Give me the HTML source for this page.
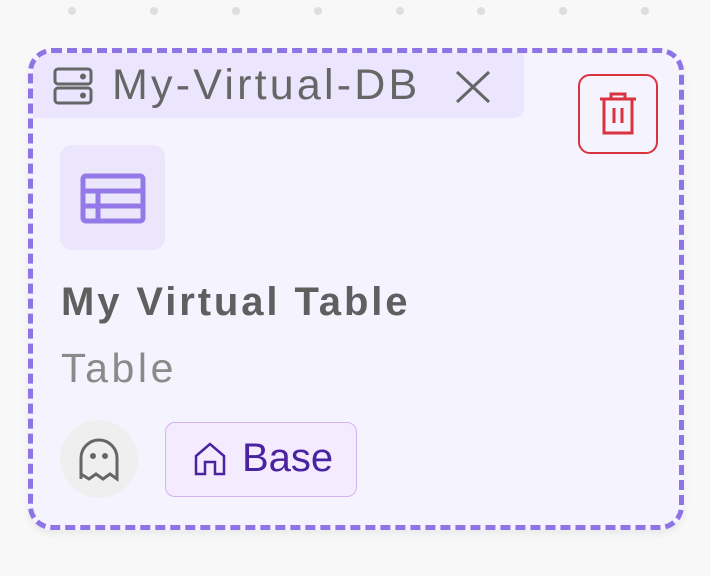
<!DOCTYPE html>
<html><head><style>
body{margin:0;width:710px;height:576px;background:#f8f8f8;position:relative;overflow:hidden;font-family:"Liberation Sans",sans-serif}
.dot{position:absolute;top:7px;width:8px;height:8px;border-radius:50%;background:#dedede}
.card{position:absolute;left:28px;top:48px;width:646px;height:472px;border:5px dashed #8f74e6;border-radius:24px;background:#f5f3fe;box-shadow:0 4px 8px rgba(0,0,0,.06)}
.tab{position:absolute;left:33px;top:53px;width:491px;height:65px;background:#ebe6fd;border-radius:20px 0 10px 0}
.t{position:absolute;white-space:nowrap}
</style></head><body>
<div class="dot" style="left:68px"></div><div class="dot" style="left:150px"></div><div class="dot" style="left:232px"></div><div class="dot" style="left:314px"></div><div class="dot" style="left:396px"></div><div class="dot" style="left:477px"></div><div class="dot" style="left:559px"></div><div class="dot" style="left:641px"></div>
<div class="card"></div>
<div class="tab"></div>
<svg style="position:absolute;left:53px;top:67px" width="40" height="38" viewBox="0 0 40 38" fill="none" stroke="#666" stroke-width="3"><rect x="2" y="2" width="36" height="15" rx="3"/><rect x="2" y="21" width="36" height="15" rx="3"/><circle cx="30" cy="9.5" r="1.5" fill="#666"/><circle cx="30" cy="28.5" r="1.5" fill="#666"/></svg>
<div class="t" style="left:112px;top:61px;font-size:43px;color:#666;letter-spacing:3.2px">My-Virtual-DB</div>
<svg style="position:absolute;left:455px;top:70px" width="36" height="34" fill="none" stroke="#666" stroke-width="3"><path d="M2 2L34 32M34 2L2 32"/></svg>
<div style="position:absolute;left:578px;top:74px;width:76px;height:76px;border:2px solid #d9333f;border-radius:12px"></div>
<svg style="position:absolute;left:598px;top:92px" width="40" height="44" fill="none" stroke="#d9333f" stroke-width="3"><path d="M2 7H38M13 7V2H27V7M6 7V41H34V7M16 16V31M24 16V31"/></svg>
<div style="position:absolute;left:60px;top:145px;width:105px;height:105px;background:#ebe6fc;border-radius:12px"></div>
<svg style="position:absolute;left:80px;top:173px" width="66" height="51" fill="none" stroke="#9479e8" stroke-width="5"><rect x="3" y="3" width="60" height="45" rx="3"/><path d="M3 18H63M3 33H63M18 18V48"/></svg>
<div class="t" style="left:61px;top:280px;font-size:40px;font-weight:bold;color:#5f5f5f;letter-spacing:2.9px">My Virtual Table</div>
<div class="t" style="left:61px;top:345px;font-size:41px;color:#8a8a8a;letter-spacing:3.6px">Table</div>
<div style="position:absolute;left:60px;top:420px;width:78px;height:78px;border-radius:50%;background:#efefef"></div>
<svg style="position:absolute;left:78px;top:438px" width="42" height="44" fill="none" stroke="#666" stroke-width="3"><path d="M3 41V20A18 18 0 0 1 39 20V41L32 36L25 41L18 36L11 41L3 36"/><circle cx="15" cy="18" r="1.5" fill="#666"/><circle cx="27" cy="18" r="1.5" fill="#666"/></svg>
<div style="position:absolute;left:165px;top:422px;width:190px;height:73px;border:1.5px solid #d5b2f0;background:#f5ebfe;border-radius:10px"></div>
<svg style="position:absolute;left:193px;top:442px" width="34" height="34" fill="none" stroke="#4a24a0" stroke-width="2.5"><path d="M3 14L17 2L31 14V32H22V20H12V32H3Z"/></svg>
<div class="t" style="left:242px;top:436px;font-size:40px;color:#4a24a0">Base</div>
</body></html>
